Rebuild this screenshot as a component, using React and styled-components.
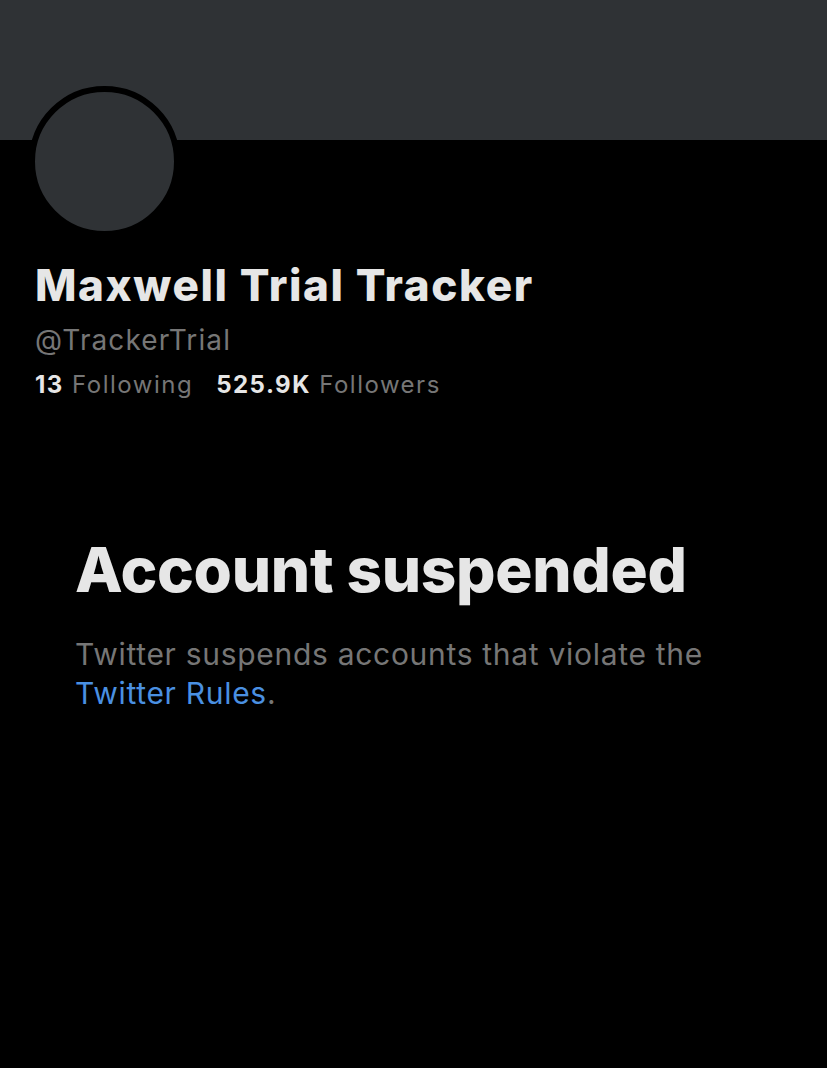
import React from "react";
import styled, { createGlobalStyle } from "styled-components";

const GlobalStyle = createGlobalStyle`
  html, body {
    margin: 0;
    padding: 0;
    background: #000000;
  }
  body {
    font-family: Inter, "Noto Sans", sans-serif;
  }
`;

const Page = styled.div`
  width: 827px;
  min-height: 1068px;
  background: #000000;
  overflow: hidden;
`;

const Banner = styled.div`
  height: 140px;
  background: #2f3235;
`;

const Profile = styled.div`
  padding: 0 35px;
`;

const AvatarRing = styled.div`
  width: 139px;
  height: 139px;
  margin-top: -54px;
  margin-left: -6px;
  border: 6px solid #000000;
  border-radius: 50%;
  background: #2f3235;
`;

const Name = styled.h1`
  margin: 23px 0 0 0;
  font-size: 44px;
  font-weight: 800;
  line-height: 50px;
  color: #e6e6e6;
  letter-spacing: 1.6px;
`;

const Handle = styled.div`
  margin-top: 12px;
  font-size: 28px;
  line-height: 36px;
  color: #767676;
  letter-spacing: 1.1px;
`;

const Stats = styled.div`
  display: flex;
  gap: 23px;
  margin-top: 11px;
  font-size: 24px;
  line-height: 32px;
  color: #767676;
  letter-spacing: 1.5px;
`;

const Stat = styled.span`
  b {
    color: #e6e6e6;
    font-weight: 700;
  }
`;

const Notice = styled.div`
  padding: 133px 75px 0 75px;
`;

const Title = styled.h2`
  margin: 0;
  font-size: 62px;
  font-weight: 800;
  line-height: 72px;
  color: #e6e6e6;
  letter-spacing: -0.3px;
`;

const Message = styled.p`
  max-width: 650px;
  margin: 29px 0 0 0;
  font-size: 30px;
  line-height: 39px;
  color: #767676;
  letter-spacing: 0.7px;
`;

const RulesLink = styled.a`
  color: #4a90e2;
  text-decoration: none;
`;

export default function App() {
  return (
    <Page>
      <GlobalStyle />
      <Banner />
      <Profile>
        <AvatarRing />
        <Name>Maxwell Trial Tracker</Name>
        <Handle>@TrackerTrial</Handle>
        <Stats>
          <Stat>
            <b>13</b> Following
          </Stat>
          <Stat>
            <b>525.9K</b> Followers
          </Stat>
        </Stats>
      </Profile>
      <Notice>
        <Title>Account suspended</Title>
        <Message>
          Twitter suspends accounts that violate the{" "}
          <RulesLink href="#">Twitter Rules</RulesLink>.
        </Message>
      </Notice>
    </Page>
  );
}
